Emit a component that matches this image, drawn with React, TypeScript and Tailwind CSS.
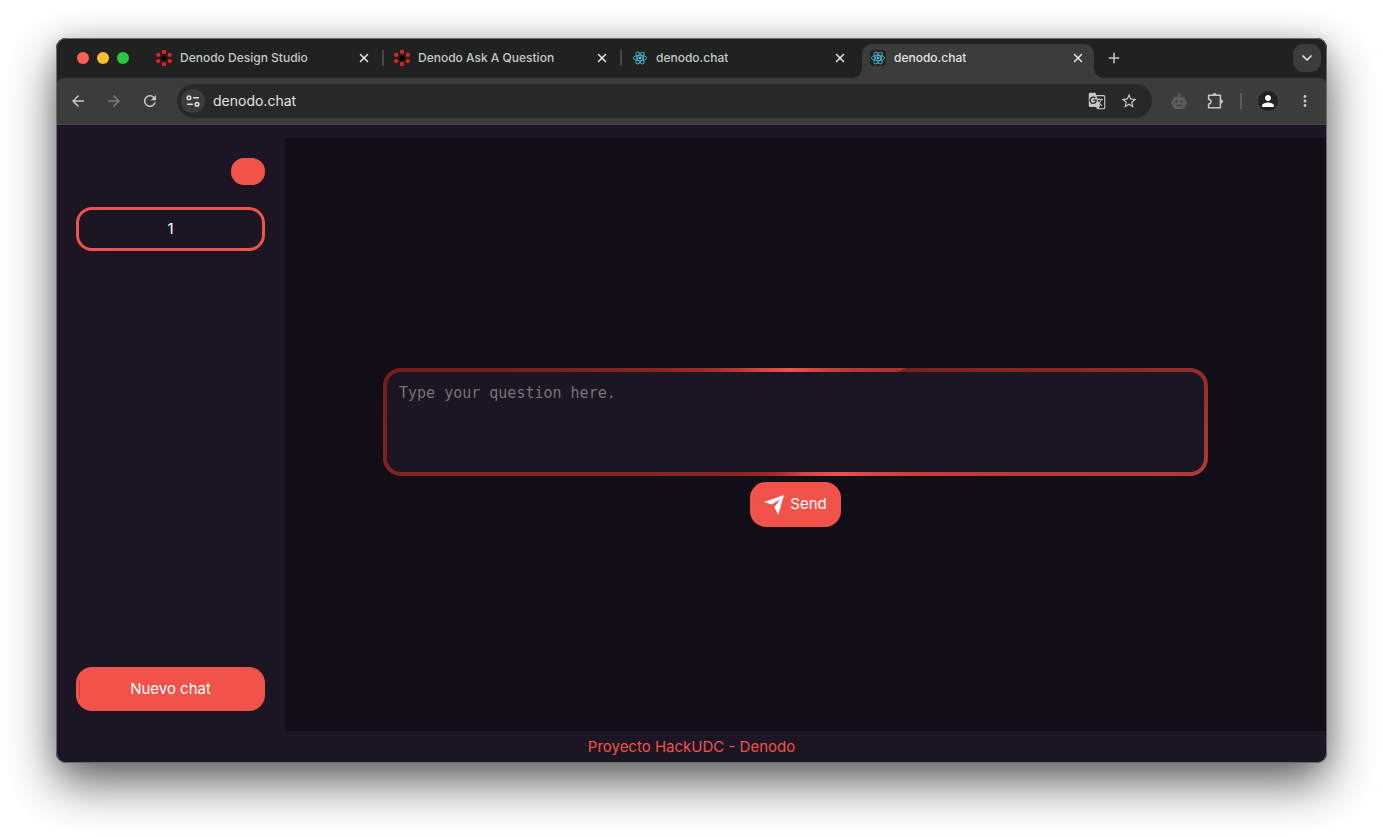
import { useState } from "react";
import type { FC, FormEvent } from "react";
import clsx from "clsx";
import { ChevronDown, X } from "lucide-react";
import {
  MdAdd,
  MdArrowBack,
  MdArrowForward,
  MdGTranslate,
  MdMoreVert,
  MdPerson,
  MdRefresh,
  MdStarBorder,
} from "react-icons/md";

type TabIcon = "denodo" | "react";

const TABS: { id: number; title: string; icon: TabIcon }[] = [
  { id: 1, title: "Denodo Design Studio", icon: "denodo" },
  { id: 2, title: "Denodo Ask A Question", icon: "denodo" },
  { id: 3, title: "denodo.chat", icon: "react" },
  { id: 4, title: "denodo.chat", icon: "react" },
];

const DenodoIcon: FC = () => (
  <svg className="h-4 w-4 shrink-0" viewBox="0 0 16 16" aria-hidden="true">
    <circle cx="8" cy="8" r="2.6" fill="#000" />
    <g fill="#ec1c24">
      <rect x="6" y="0" width="4" height="3.8" rx="0.8" />
      <rect x="6" y="12.2" width="4" height="3.8" rx="0.8" />
      <circle cx="2.2" cy="4.9" r="2.1" />
      <circle cx="13.8" cy="4.9" r="2.1" />
      <circle cx="2.2" cy="11.1" r="2.1" />
      <circle cx="13.8" cy="11.1" r="2.1" />
    </g>
  </svg>
);

const ReactIcon: FC<{ active: boolean }> = ({ active }) => (
  <svg
    className={clsx("h-4 w-4 shrink-0 rounded-sm", active && "bg-[#202221]")}
    viewBox="0 0 16 16"
    fill="none"
    stroke="#4fb3cf"
    strokeWidth="0.9"
    aria-hidden="true"
  >
    <ellipse cx="8" cy="8" rx="6.6" ry="2.7" />
    <ellipse cx="8" cy="8" rx="6.6" ry="2.7" transform="rotate(60 8 8)" />
    <ellipse cx="8" cy="8" rx="6.6" ry="2.7" transform="rotate(120 8 8)" />
    <circle cx="8" cy="8" r="1.4" fill="#58c4dc" stroke="none" />
  </svg>
);

const SiteInfoIcon: FC = () => (
  <svg className="h-4 w-4" viewBox="0 0 16 16" fill="none" stroke="currentColor" strokeWidth="1.5" strokeLinecap="round" aria-hidden="true">
    <circle cx="4" cy="4.7" r="1.8" />
    <path d="M8.7 4.7H13.3M2.7 11.3H7.3" />
    <circle cx="12" cy="11.3" r="1.8" />
  </svg>
);

const RobotIcon: FC = () => (
  <svg className="h-[18px] w-[18px]" viewBox="0 0 18 18" aria-hidden="true">
    <g fill="currentColor">
      <circle cx="9" cy="2.4" r="1.5" />
      <path d="M8.3 3H9.7V6H8.3Z" />
      <rect x="1" y="8.2" width="16" height="5" rx="2.2" />
      <rect x="3" y="5" width="12" height="12" rx="2.4" />
    </g>
    <g fill="#3c3c3c">
      <circle cx="6.4" cy="9.6" r="1.2" />
      <circle cx="11.6" cy="9.6" r="1.2" />
      <rect x="6" y="12.8" width="6" height="1.2" rx="0.6" />
    </g>
  </svg>
);

const PuzzleIcon: FC = () => (
  <svg className="h-[18px] w-[18px]" viewBox="0 0 18 18" aria-hidden="true">
    <path
      d="M2.6 3.2H14.4V15.8H2.6V12C5.8 11.6 5.8 7.6 2.6 7.2Z"
      fill="none"
      stroke="currentColor"
      strokeWidth="1.5"
      strokeLinejoin="round"
    />
    <path d="M6.6 3a2 2 0 0 1 4 0ZM15 7.6a2 2 0 0 1 0 4Z" fill="currentColor" />
  </svg>
);

const SendIcon: FC = () => (
  <svg className="h-5 w-5" viewBox="0 0 20 20" fill="currentColor" aria-hidden="true">
    <path d="M20 0L0 7L7.8 9.6L15.9 4.3L10.3 12.2L14.2 20Z" />
  </svg>
);

const Tab: FC<{ title: string; icon: TabIcon; active: boolean; divider: boolean; onSelect: () => void }> = ({
  title,
  icon,
  active,
  divider,
  onSelect,
}) => (
  <div className="relative flex max-w-[238px] min-w-0 flex-1 px-[3px] pt-[6px]">
    <div
      className={clsx(
        "flex h-[34px] w-full items-start gap-2 px-2 pt-[6px]",
        active ? "rounded-t-[10px] bg-[#3c3c3c] text-[#e3e3e3]" : "text-[#c7c7c7]"
      )}
    >
      <button type="button" onClick={onSelect} className="flex h-4 min-w-0 flex-1 items-center gap-2 text-left">
        {icon === "denodo" ? <DenodoIcon /> : <ReactIcon active={active} />}
        <span className="truncate text-xs font-medium">{title}</span>
      </button>
      <button type="button" aria-label={`Close ${title}`} className="flex h-4 w-4 items-center justify-center text-[#e3e3e3]">
        <X className="h-[14px] w-[14px]" strokeWidth={2.6} />
      </button>
    </div>
    {/* Curved feet that join the active tab to the toolbar */}
    {active && (
      <>
        <span className="absolute bottom-0 -left-[7px] h-[10px] w-[10px] bg-[radial-gradient(circle_at_0_0,transparent_10px,#3c3c3c_10px)]" />
        <span className="absolute -right-[7px] bottom-0 h-[10px] w-[10px] bg-[radial-gradient(circle_at_100%_0,transparent_10px,#3c3c3c_10px)]" />
      </>
    )}
    {divider && <span className="absolute top-3 -right-px h-4 w-[2px] bg-[#464746]" />}
  </div>
);

const BrowserBar: FC = () => {
  const [activeTab, setActiveTab] = useState(4);
  const [url, setUrl] = useState("denodo.chat");

  return (
    <header className="bg-[#202221]">
      <div className="flex h-10 items-start pr-[6px]">
        <div className="flex h-10 w-[89px] shrink-0 items-center gap-2 pl-[21px]">
          <button type="button" aria-label="Close window" className="h-3 w-3 rounded-full bg-[#ff5f57]" />
          <button type="button" aria-label="Minimize window" className="h-3 w-3 rounded-full bg-[#febc2e]" />
          <button type="button" aria-label="Zoom window" className="h-3 w-3 rounded-full bg-[#28c840]" />
        </div>
        <nav className="flex min-w-0 flex-1 items-start">
          {TABS.map((tab, i) => (
            <Tab
              key={tab.id}
              title={tab.title}
              icon={tab.icon}
              active={tab.id === activeTab}
              divider={tab.id !== activeTab && TABS[i + 1]?.id !== activeTab}
              onSelect={() => setActiveTab(tab.id)}
            />
          ))}
          <button type="button" aria-label="New tab" className="ml-2 flex h-10 w-[18px] items-center justify-center text-[#c7c7c7]">
            <MdAdd className="h-[18px] w-[18px]" />
          </button>
        </nav>
        <button type="button" aria-label="Search tabs" className="mt-[6px] flex h-7 w-7 shrink-0 items-center justify-center rounded-[10px] bg-[#3c3c3c] text-[#e3e3e3]">
          <ChevronDown className="h-4 w-4" strokeWidth={2.6} />
        </button>
      </div>

      <div className="flex h-[47px] items-center rounded-t-lg border-b border-[#4a4a4a] bg-[#3c3c3c] px-[13px] text-[#c7c7c7]">
        <div className="flex gap-[18px]">
          <button type="button" aria-label="Back"><MdArrowBack className="h-[18px] w-[18px]" /></button>
          <button type="button" aria-label="Forward" className="text-[#7c7c7c]"><MdArrowForward className="h-[18px] w-[18px]" /></button>
          <button type="button" aria-label="Reload"><MdRefresh className="h-[18px] w-[18px]" /></button>
        </div>
        <div className="ml-[18px] flex h-[34px] min-w-0 flex-1 items-center rounded-full bg-[#282828] pr-[14px] pl-1">
          <button type="button" aria-label="Site information" className="flex h-6 w-6 items-center justify-center rounded-full bg-[#3c3c3c] text-[#e3e3e3]">
            <SiteInfoIcon />
          </button>
          <input
            type="text"
            aria-label="Address"
            value={url}
            onChange={(e) => setUrl(e.target.value)}
            className="ml-2 min-w-0 flex-1 bg-transparent text-sm text-[#e3e3e3] outline-none"
          />
          <button type="button" aria-label="Translate" className="mr-[14px]"><MdGTranslate className="h-[18px] w-[18px]" /></button>
          <button type="button" aria-label="Bookmark"><MdStarBorder className="h-[18px] w-[18px]" /></button>
        </div>
        <div className="ml-[18px] flex items-center">
          <button type="button" aria-label="Assistant" className="text-[#5c5c5c]"><RobotIcon /></button>
          <button type="button" aria-label="Extensions" className="ml-[18px]"><PuzzleIcon /></button>
          <span className="mx-4 h-4 w-[2px] bg-[#5c5c5c]" />
          <button type="button" aria-label="Profile" className="flex h-5 w-5 items-center justify-center rounded-full bg-[#202221] text-white">
            <MdPerson className="h-[18px] w-[18px]" />
          </button>
          <button type="button" aria-label="Menu" className="ml-[18px]"><MdMoreVert className="h-[18px] w-[18px]" /></button>
        </div>
      </div>
    </header>
  );
};

export default function App() {
  const [chats, setChats] = useState([1]);
  const [question, setQuestion] = useState("");

  const handleSubmit = (e: FormEvent) => {
    e.preventDefault();
    setQuestion("");
  };

  return (
    <div className="flex h-screen flex-col bg-white px-14 pt-[38px] pb-[74px] font-['Inter','Liberation_Sans',sans-serif]">
      <div className="relative flex flex-1 flex-col overflow-hidden rounded-[10px] bg-[#1c1524] shadow-[0_20px_48px_rgba(0,0,0,0.62),0_0_20px_rgba(0,0,0,0.12)]">
        <BrowserBar />

        <div className="flex flex-1 pt-[13px]">
          <aside className="flex w-[229px] shrink-0 flex-col p-5">
            <button type="button" aria-label="Toggle sidebar" className="h-[27px] w-[34px] self-end rounded-[13px] bg-[#f1524a]" />
            <ul className="mt-[22px] space-y-2">
              {chats.map((chat) => (
                <li key={chat}>
                  <button type="button" className="h-11 w-full rounded-2xl border-3 border-[#f1524a] text-[15px] text-white">
                    {chat}
                  </button>
                </li>
              ))}
            </ul>
            <button
              type="button"
              onClick={() => setChats([...chats, chats.length + 1])}
              className="relative mt-auto h-11 w-full rounded-2xl bg-[#f1524a] text-[15px] text-white before:absolute before:inset-y-[13px] before:left-[3px] before:w-px before:bg-[#c8403c]"
            >
              Nuevo chat
            </button>
          </aside>

          <main className="flex flex-1 flex-col justify-center bg-[#120e18] pt-[26px] pr-[119px] pl-[98px]">
            <form onSubmit={handleSubmit} className="flex flex-col items-center gap-[6px]">
              <div className="w-full rounded-[18px] bg-[conic-gradient(from_64deg,#741e1a_0deg,#8c2622_14deg,#b23a34_34deg,#c33a34_42deg,#f1524a_76deg,#d8453d_105deg,#a52c26_135deg,#8f2520_160deg,#85231f_198deg,#741d1a_215deg,#8a2520_225deg,#9c2a25_234deg,#d0443c_260deg,#f1524a_290deg,#ab302a_360deg)] p-1">
                <textarea
                  aria-label="Question"
                  placeholder="Type your question here."
                  value={question}
                  onChange={(e) => setQuestion(e.target.value)}
                  className="block h-[100px] w-full resize-none rounded-[14px] bg-[#1c1524] p-3 font-['DejaVu_Sans_Mono',monospace] text-[15px] leading-[18px] text-white outline-none placeholder:text-[#757575]"
                />
              </div>
              <button type="submit" className="flex h-[45px] items-center gap-[6px] rounded-2xl bg-[#f1524a] px-[14px] text-[15px] text-white">
                <SendIcon />
                Send
              </button>
            </form>
          </main>
        </div>

        <footer className="flex h-8 items-center justify-center text-[15px] text-[#f1524a]">Proyecto HackUDC - Denodo</footer>

        {/* Hairline around the whole window */}
        <div className="pointer-events-none absolute inset-0 rounded-[10px] border border-[#6b6a6c]" />
      </div>
    </div>
  );
}
